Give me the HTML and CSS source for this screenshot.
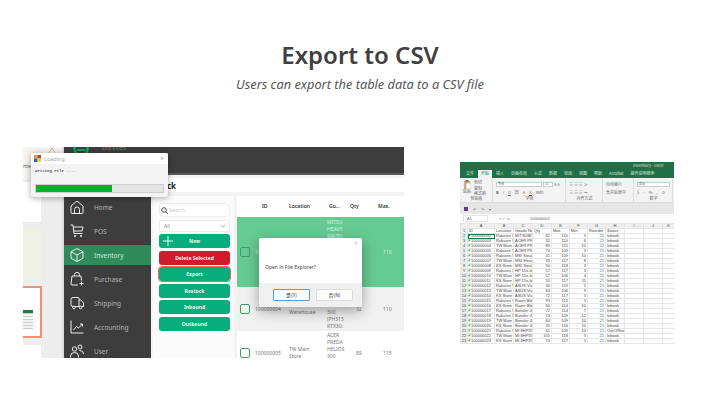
FILE: index.html
```html
<!DOCTYPE html>
<html lang="en">
<head>
    <meta charset="UTF-8">
    <title>Export to CSV</title>
    <link rel="stylesheet" href="styles.css">
</head>
<body>
    <header class="title-block">
        <h1>Export to CSV</h1>
        <p>Users can export the table data to a CSV file</p>
    </header>

    <main class="shots">
        <!-- left screenshot: the app with the dialogs open -->
        <div class="app-shot">
            <div class="slides">
                <div class="slides-top">
                    <svg class="chevron" width="12" height="9" viewBox="0 0 12 9"><path d="M1 8.5L6 1l5 7.5" fill="none" stroke="#e9a6a0" stroke-width="1"/></svg>
                    <span>nte</span>
                </div>
                <div class="slide slide-a"></div>
                <div class="slide slide-b"></div>
                <div class="slide slide-c"><div class="mini-sheet"></div></div>
                <div class="slide slide-d"></div>
            </div>
            <div class="app">
                <div class="topbar">
                    <svg class="logo" width="16" height="14" viewBox="0 0 16 14"><circle cx="8" cy="7" r="6.5" fill="none" stroke="#12a35c" stroke-width="2.5"/><path d="M4 8h8" stroke="#12a35c" stroke-width="2"/></svg>
                    <span class="brand">Better</span>
                </div>
                <div class="app-body">
                    <nav class="sidebar">
                        <div class="nav-item">
                            <svg width="14" height="14" viewBox="0 0 14 14"><path d="M1 6L7 1l6 5v6.5q0 1-1 1H2q-1 0-1-1zM4.5 13.5V9.500Q4.5 7 7 7t2.5 2.5v4" fill="none" stroke="#eee" stroke-width="1"/></svg>
                            <span>Home</span>
                        </div>
                        <div class="nav-item">
                            <svg width="14" height="14" viewBox="0 0 14 14"><path d="M.5 1H3l1 8.5h8.5M3.5 3H13l-1 4H4" fill="none" stroke="#eee" stroke-width="1"/><circle cx="5" cy="12" r="1" fill="#eee"/><circle cx="11" cy="12" r="1" fill="#eee"/></svg>
                            <span>POS</span>
                        </div>
                        <div class="nav-item is-active">
                            <svg width="14" height="14" viewBox="0 0 14 14"><path d="M7 .5l6 3.25v6.5L7 13.5l-6-3.25v-6.5zM1 3.75L7 7l6-3.25M7 7v6.5" fill="none" stroke="#eee" stroke-width="1"/></svg>
                            <span>Inventory</span>
                        </div>
                        <div class="nav-item">
                            <svg width="14" height="14" viewBox="0 0 14 14"><path d="M4.5 4V2.5Q4.5 .5 7 .5t2.5 2V4M8 13H2q-1 0-1-1l1-8h9l.5 4.5M11.5 9.5v4M9.5 11.5h4" fill="none" stroke="#eee" stroke-width="1"/></svg>
                            <span>Purchase</span>
                        </div>
                        <div class="nav-item">
                            <svg width="14" height="14" viewBox="0 0 14 14"><path d="M3 1.5h5q1 0 1 1v8H3q-2 0-2-2v-5q0-2 2-2zM9 4h2l2.5 3v3.5H9" fill="none" stroke="#eee" stroke-width="1"/><circle cx="4" cy="11.5" r="1.3" fill="#3d3d3d" stroke="#eee"/><circle cx="10.5" cy="11.5" r="1.3" fill="#3d3d3d" stroke="#eee"/></svg>
                            <span>Shipping</span>
                        </div>
                        <div class="nav-item">
                            <svg width="14" height="14" viewBox="0 0 14 14"><path d="M1 .5V13h12.500M3.5 10l3-3.500 2 1.500 4-4M10 4h2.5v2.5" fill="none" stroke="#eee" stroke-width="1"/></svg>
                            <span>Accounting</span>
                        </div>
                        <div class="nav-item">
                            <svg width="14" height="14" viewBox="0 0 14 14"><circle cx="4.5" cy="5" r="2.2" fill="none" stroke="#eee"/><circle cx="10" cy="3" r="2" fill="none" stroke="#eee"/><path d="M.5 13.5V12q0-3.500 4-3.500t4 3.500v1.500M9.500 6.500q4 0 4 3.500" fill="none" stroke="#eee"/></svg>
                            <span>User</span>
                        </div>
                    </nav>
                    <div class="content">
                        <div class="page-title">Stock</div>
                        <div class="work">
                            <aside class="filters">
                                <div class="search">
                                    <svg class="search-icon" width="7" height="7" viewBox="0 0 7 7"><circle cx="3" cy="3" r="2.3" fill="none" stroke="#444"/><path d="M4.7 4.7L6.8 6.8" stroke="#444"/></svg>
                                    <span>Search</span>
                                </div>
                                <div class="select">All<span class="chev"></span></div>
                                <div class="btn">
                                    <svg class="plus" width="10" height="10" viewBox="0 0 10 10"><path d="M5 0v10M0 5h10" stroke="#e8f8f2" stroke-width="1"/></svg>
                                    <span>New</span>
                                </div>
                                <div class="btn btn-red">Delete Selected</div>
                                <div class="btn is-marked">Export</div>
                                <div class="btn">Restock</div>
                                <div class="btn">Inbound</div>
                                <div class="btn">Outbound</div>
                            </aside>
                            <section class="table">
                                <div class="row row-head">
                                    <span class="c-check"></span>
                                    <span class="c-id">ID</span>
                                    <span class="c-loc">Location</span>
                                    <span class="c-goods">Go...</span>
                                    <span class="c-qty">Qty</span>
                                    <span class="c-max">Max.</span>
                                </div>
                                <div class="row row-selected">
                                    <span class="c-check"><i class="box"></i></span>
                                    <span class="c-id">100000003</span>
                                    <span class="c-loc"></span>
                                    <span class="c-goods goods-top">MITSU<br>HEAVY<br>SRK50:</span>
                                    <span class="c-qty"></span>
                                    <span class="c-max">110</span>
                                </div>
                                <div class="row row-grey">
                                    <span class="c-check"><i class="box"></i></span>
                                    <span class="c-id">100000004</span>
                                    <span class="c-loc">TW Main<br>Warehouse</span>
                                    <span class="c-goods">ACER<br>PREDA<br>HELIOS<br>300<br>(PH315<br>RTX30:</span>
                                    <span class="c-qty">32</span>
                                    <span class="c-max">110</span>
                                </div>
                                <div class="row">
                                    <span class="c-check"><i class="box"></i></span>
                                    <span class="c-id">100000005</span>
                                    <span class="c-loc">TW Main<br>Store</span>
                                    <span class="c-goods">ACER<br>PREDA<br>HELIOS<br>300<br>(PH315<br>RTX30:</span>
                                    <span class="c-qty">89</span>
                                    <span class="c-max">115</span>
                                </div>
                            </section>
                        </div>
                    </div>
                </div>
            </div>

            <div class="loading">
                <div class="loading-title">
                    <svg width="7" height="7" viewBox="0 0 7 7"><rect width="3.5" height="3.5" fill="#e0a030"/><rect x="3.5" width="3.5" height="3.5" fill="#c04040"/><rect y="3.5" width="3.5" height="3.5" fill="#3060c0"/><rect x="3.5" y="3.5" width="3.5" height="3.5" fill="#e0d050"/></svg>
                    <span>Loading</span>
                    <span class="close">×</span>
                </div>
                <div class="loading-text">Writing File ....</div>
                <div class="progress"><div class="progress-fill"></div></div>
            </div>

            <div class="dialog">
                <div class="dialog-main">
                    <span class="close">×</span>
                    <p>Open in File Explorer?</p>
                </div>
                <div class="dialog-foot">
                    <span class="dlg-btn is-default">是(Y)</span>
                    <span class="dlg-btn">否(N)</span>
                </div>
            </div>
        </div>

        <!-- right screenshot: the exported file in a spreadsheet -->
        <div class="sheet-shot">
            <div class="xl-title">Inventory - Excel</div>
            <div class="xl-tabs">
                <span>文件</span><span class="is-on">开始</span><span>插入</span><span>页面布局</span><span>公式</span><span>数据</span><span>审阅</span><span>视图</span><span>帮助</span><span>Acrobat</span><span>操作说明搜索</span>
            </div>
            <div class="xl-ribbon">
                <div class="rb rb-clip">
                    <div class="rb-body clip-body">
                        <div class="paste">
                            <svg width="8" height="9" viewBox="0 0 8 9"><rect x="1" y="1" width="6" height="8" fill="#d8b070"/><rect x="2.5" width="3" height="2" fill="#777"/><rect x="3" y="3" width="5" height="6" fill="#fff" stroke="#999" stroke-width=".5"/></svg>
                            <span>粘贴</span>
                        </div>
                        <div class="clip-list"><span>剪切</span><span>复制</span><span>格式刷</span></div>
                    </div>
                    <div class="rb-label">剪贴板</div>
                </div>
                <div class="rb rb-font">
                    <div class="rb-body">
                        <div class="rb-line">
                            <div class="rb-input font-name">等线</div>
                            <div class="rb-input font-size">11</div>
                            <span>A A</span>
                        </div>
                        <div class="rb-line marks">
                            <b>B</b><i>I</i><u>U</u><span>田</span><span class="mark-y">A</span><span class="mark-r">A</span><span>wén</span>
                        </div>
                    </div>
                    <div class="rb-label">字体</div>
                </div>
                <div class="rb rb-align">
                    <div class="rb-body">
                        <div class="rb-line">≡ ≡ ≡ ≫</div>
                        <div class="rb-line">≡ ≡ ≡ ⇥</div>
                    </div>
                    <div class="rb-label">对齐方式</div>
                </div>
                <div class="rb rb-wrap">
                    <div class="rb-body">
                        <div class="rb-line">自动换行</div>
                        <div class="rb-line">合并后居中</div>
                    </div>
                </div>
                <div class="rb rb-num">
                    <div class="rb-body">
                        <div class="rb-line"><div class="rb-input num-input">常规</div></div>
                        <div class="rb-line marks"><span>$</span><span>-</span><span>%</span><span>,</span><span>.0</span></div>
                    </div>
                    <div class="rb-label">数字</div>
                </div>
            </div>
            <div class="xl-quick">
                <span class="save"></span><span>↶</span><span>↷</span><span>▾</span>
            </div>
            <div class="xl-formula">
                <span class="name-box">A1</span>
                <span class="fx">× ✓ fx</span>
                <span class="fx-val">100000001</span>
            </div>
            <table class="xl-grid" id="grid"></table>
        </div>
    </main>

    <script src="grid.js"></script>
</body>
</html>
```

FILE: styles.css
```css
body {
    margin: 0;
    width: 720px;
    height: 405px;
    overflow: hidden;
    background: #fff;
    font-family: "Noto Sans", sans-serif;
    color: #404040;
}
.title-block {
    padding-top: 39px;
    text-align: center;
}
.title-block h1 {
    margin: 0;
    font-size: 24px;
    line-height: 32px;
    font-weight: 600;
}
.title-block p {
    margin: 5px 0 0;
    font-size: 12.8px;
    line-height: 16px;
    font-style: italic;
    color: #555;
}
.shots {
    display: flex;
    align-items: flex-start;
    gap: 56px;
    padding: 55px 0 0 23px;
}

/* left screenshot */
.app-shot {
    position: relative;
    display: flex;
    width: 381px;
    height: 211px;
    overflow: hidden;
    background: #f1f1f1;
    font-size: 5px;
}
.slides {
    width: 41px;
    flex: none;
    box-sizing: border-box;
    background: #ededed;
    border-right: 2px solid #dcdcdc;
}
.slides-top {
    position: relative;
    height: 33px;
    background: #f6f3f1;
    font-size: 5px;
    color: #666;
}
.slides-top span {
    position: absolute;
    left: 0;
    top: 16px;
}
.chevron {
    position: absolute;
    left: 23px;
    top: 0;
}
.slide {
    width: 18px;
    background: #fff;
}
.slide-a {
    height: 40px;
    margin-top: 2px;
}
.slide-b {
    height: 50px;
    margin-top: 8px;
    background: #eef1e3;
}
.slide-c {
    box-sizing: border-box;
    width: 19px;
    height: 52px;
    margin-top: 6px;
    padding-top: 22px;
    border: 2px solid #ef8d75;
    border-left: 0;
}
.mini-sheet {
    width: 10px;
    height: 20px;
    box-sizing: border-box;
    background: repeating-linear-gradient(#ccc 0 1px, #f4f4f4 1px 3px);
    border-top: 3px solid #1f7a45;
}
.slide-d {
    height: 20px;
    margin-top: 7px;
}
.app {
    width: 340px;
    flex: none;
    display: flex;
    flex-direction: column;
}
.topbar {
    height: 26px;
    flex: none;
    background: #3d3d3d;
    border-bottom: 2px solid #595959;
    display: flex;
    align-items: flex-start;
    gap: 13px;
    padding-left: 9px;
    overflow: hidden;
}
.logo {
    flex: none;
    margin-top: -5px;
}
.brand {
    margin-top: -6px;
    color: #1d8a50;
    font-size: 8px;
    font-weight: 700;
}
.app-body {
    display: flex;
    flex: 1;
    min-height: 0;
}
.sidebar {
    width: 87px;
    flex: none;
    box-sizing: border-box;
    background: #3d3d3d;
    padding-top: 22px;
    display: flex;
    flex-direction: column;
    gap: 4px;
}
.nav-item {
    height: 20px;
    flex: none;
    display: flex;
    align-items: center;
    gap: 10px;
    padding-left: 6px;
    color: #b5b5b5;
    font-size: 6.5px;
}
.nav-item svg {
    flex: none;
}
.nav-item.is-active {
    background: #2f8c5a;
    color: #cfe6d8;
}
.content {
    flex: 1;
    min-width: 0;
    background: #f3f3f3;
    padding-top: 3px;
}
.page-title {
    height: 14px;
    background: #fff;
    padding-left: 3px;
    font-size: 8px;
    font-weight: 700;
    color: #222;
    line-height: 16px;
}
.work {
    display: flex;
    margin-top: 4px;
    gap: 3px;
    padding-left: 2px;
}
.filters {
    width: 81px;
    flex: none;
    box-sizing: border-box;
    height: 170px;
    padding: 7px 0 0 6px;
    background: #fbfbfb;
    display: flex;
    flex-direction: column;
    gap: 2.5px;
}
.search, .select {
    width: 71px;
    box-sizing: border-box;
    background: #fff;
    border: 1px solid #ececec;
    border-radius: 4px;
    font-size: 5px;
    position: relative;
}
.search {
    height: 14px;
    display: flex;
    align-items: center;
    gap: 1px;
    padding-left: 1px;
    color: #c8c8c8;
}
.search-icon {
    flex: none;
}
.select {
    height: 12px;
    color: #888;
    padding-left: 4px;
    line-height: 10px;
    border-radius: 2px;
}
.chev {
    position: absolute;
    right: 4px;
    top: 2px;
    width: 3px;
    height: 3px;
    border: solid #ccc;
    border-width: 0 1px 1px 0;
    transform: rotate(45deg);
}
.btn {
    width: 71px;
    height: 14px;
    flex: none;
    background: #07ad7b;
    color: #e8f8f2;
    font-size: 5px;
    font-weight: 700;
    border-radius: 3px;
    display: flex;
    align-items: center;
    justify-content: center;
    position: relative;
}
.plus {
    position: absolute;
    left: 4px;
    top: 2px;
}
.btn-red {
    background: #cf1b2b;
}
.is-marked {
    outline: 1px solid #e8646a;
}
.table {
    flex: 1;
    min-width: 0;
    background: #fff;
    font-size: 5px;
    color: #777;
}
.row {
    display: flex;
    align-items: center;
    height: 44px;
    background: #fff;
}
.row-head {
    height: 21px;
    color: #333;
    font-weight: 600;
}
.row-selected {
    height: 70px;
    background: #66cb92;
    color: #d8f3e2;
}
.goods-top {
    align-self: flex-start;
    padding-top: 2px;
}
.row-grey {
    background: #f1f1f1;
}
.row > span {
    line-height: 7px;
    flex: none;
    box-sizing: border-box;
}
.c-check {
    width: 18px;
    padding-left: 3px;
}
.c-id {
    width: 34px;
}
.row-head .c-id {
    padding-left: 7px;
}
.c-loc {
    width: 38px;
}
.c-goods {
    width: 23px;
}
.row-head .c-goods {
    padding-left: 2px;
}
.c-qty {
    width: 28px;
    padding-left: 6px;
}
.row-head .c-qty, .row-head .c-max {
    padding-left: 0;
}
.c-max {
    width: 26px;
    padding-left: 5px;
}
.box {
    display: block;
    width: 8px;
    height: 8px;
    border: 1px solid #3f9d68;
    border-radius: 2px;
}

/* overlays on the left screenshot */
.loading {
    position: absolute;
    left: 8px;
    top: 6px;
    width: 137px;
    height: 44px;
    background: #f3f3f3;
    border-radius: 2px;
    box-shadow: 0 1px 6px rgba(0, 0, 0, 0.35);
}
.loading-title {
    height: 11px;
    background: #fff;
    border-radius: 2px 2px 0 0;
    display: flex;
    align-items: center;
    gap: 3px;
    padding: 0 4px 0 3px;
    font-size: 5.5px;
    color: #aaa;
}
.loading-title .close {
    margin-left: auto;
    font-size: 7px;
}
.loading-text {
    height: 14px;
    box-sizing: border-box;
    padding: 4px 4px 0;
    font-family: "Liberation Mono", monospace;
    font-size: 4px;
    line-height: 6px;
    font-weight: 700;
    color: #555;
}
.progress {
    margin: 6px 4px 0;
    height: 9px;
    box-sizing: border-box;
    background: #e4e4e4;
    border: 1px solid #cfcfcf;
}
.progress-fill {
    width: 60%;
    height: 100%;
    background: #0aae2a;
}
.dialog {
    position: absolute;
    left: 236px;
    top: 91px;
    width: 103px;
    height: 69px;
    background: #fff;
    border-radius: 2px;
    display: flex;
    flex-direction: column;
    box-shadow: 0 4px 14px rgba(0, 0, 0, 0.35);
}
.dialog-main {
    flex: 1;
    position: relative;
    font-size: 5px;
    line-height: 6px;
    color: #444;
}
.dialog-main p {
    margin: 0;
    padding: 26px 0 0 6px;
}
.dialog-main .close {
    position: absolute;
    right: 4px;
    top: 3px;
    font-size: 7px;
    color: #bbb;
}
.dialog-foot {
    height: 24px;
    flex: none;
    background: #f0f0f0;
    display: flex;
    align-items: center;
    gap: 6px;
    padding-left: 14px;
    font-family: "Noto Sans CJK SC", sans-serif;
}
.dlg-btn {
    width: 37px;
    height: 12px;
    box-sizing: border-box;
    background: #fdfdfd;
    border: 1px solid #ddd;
    border-radius: 1px;
    text-align: center;
    font-size: 5px;
    line-height: 10px;
    color: #333;
}
.dlg-btn.is-default {
    border-color: #5a9bd0;
}

/* right screenshot */
.sheet-shot {
    width: 214px;
    height: 182px;
    margin-top: 15px;
    overflow: hidden;
    background: #fff;
    font-family: "Noto Sans CJK SC", "Liberation Sans", sans-serif;
    font-size: 4px;
    color: #666;
}
.xl-title {
    height: 8px;
    background: #1f7145;
    color: #cfe3d7;
    padding-left: 173px;
    line-height: 6px;
}
.xl-tabs {
    height: 8px;
    background: #1f7145;
    color: #d8e8df;
    display: flex;
    gap: 7px;
    padding-left: 6px;
    line-height: 7px;
}
.xl-tabs .is-on {
    background: #f3f3f3;
    color: #1f7145;
    padding: 0 3px;
    margin: 0 -3px;
}
.xl-ribbon {
    height: 25px;
    box-sizing: border-box;
    background: #f3f3f3;
    border-bottom: 1px solid #ddd;
    display: flex;
}
.rb {
    box-sizing: border-box;
    padding: 2px 2px 0 3px;
    border-right: 1px solid #ddd;
    display: flex;
    flex-direction: column;
    overflow: hidden;
}
.rb-body {
    height: 16px;
}
.rb-label {
    text-align: center;
    line-height: 5px;
}
.rb-line {
    display: flex;
    align-items: center;
    gap: 1px;
    height: 8px;
    white-space: nowrap;
}
.marks {
    gap: 4px;
}
.rb-clip {
    width: 33px;
}
.clip-body {
    display: flex;
    gap: 3px;
}
.paste {
    display: flex;
    flex-direction: column;
    align-items: center;
    line-height: 5px;
}
.clip-list {
    display: flex;
    flex-direction: column;
    line-height: 5.5px;
}
.rb-font {
    width: 73px;
}
.rb-input {
    height: 5px;
    box-sizing: border-box;
    background: #fff;
    border: 1px solid #ccc;
    line-height: 3px;
    padding-left: 1px;
    font-size: 3px;
}
.font-name {
    width: 46px;
}
.font-size {
    width: 10px;
}
.mark-y {
    border-bottom: 1px solid #ffd800;
}
.mark-r {
    border-bottom: 1px solid #e00;
}
.rb-align {
    width: 37px;
}
.rb-wrap {
    width: 31px;
}
.rb-num {
    width: 39px;
}
.num-input {
    width: 35px;
}
.xl-quick {
    height: 11px;
    box-sizing: border-box;
    background: #e6e6e6;
    padding-left: 4px;
    display: flex;
    align-items: center;
    gap: 5px;
}
.save {
    width: 4px;
    height: 4px;
    background: #5b3a9a;
}
.xl-formula {
    height: 9px;
    box-sizing: border-box;
    background: #fbfbfb;
    display: flex;
    align-items: center;
    padding-left: 3px;
    font-family: "Liberation Sans", sans-serif;
}
.name-box {
    width: 25px;
    box-sizing: border-box;
    padding-left: 3px;
    line-height: 5px;
    background: #fff;
    border: 1px solid #e4e4e4;
}
.fx {
    width: 42px;
    padding-left: 11px;
    box-sizing: border-box;
    color: #999;
}
.xl-grid {
    border-collapse: collapse;
    table-layout: fixed;
    width: 214px;
    font-family: "Liberation Sans", sans-serif;
    font-size: 4px;
    color: #444;
}
.xl-grid td, .xl-grid th {
    height: 4px;
    line-height: 4px;
    padding: 0 0 0 1px;
    border: 1px solid #e6e6e6;
    white-space: nowrap;
    overflow: hidden;
    font-weight: 400;
    text-align: left;
}
.xl-grid th {
    background: #eee;
    text-align: center;
    padding: 0;
}
.xl-grid td.num {
    text-align: right;
    padding: 0 1px 0 0;
}
.xl-grid td.code {
    background: linear-gradient(135deg, #2e9e4f 0 2px, transparent 2px);
    padding-left: 3px;
}
.xl-grid td.is-current {
    outline: 1px solid #1f7145;
    outline-offset: -1px;
}
.xl-grid td.reorder {
    color: #1f6f8a;
}
```

FILE: grid.js
```js
// fills the spreadsheet picture with the exported rows
var rows = [
  ["Rakuten S", "MITSUBISH", 82, 110, 9, 21, "Inbook"],
  ["Rakuten S", "ACER PRE", 32, 110, 6, 21, "Inbook"],
  ["TW Main", "ACER PRE", 89, 115, 10, 22, "Inbook"],
  ["Rakuten S", "ACER PRE", 74, 109, 3, 21, "Inbook"],
  ["Rakuten S", "MSI Steal", 41, 109, 10, 21, "Inbook"],
  ["TW Main", "MSI Steal", 33, 117, 8, 21, "Inbook"],
  ["KS Store", "MSI Steal", 90, 118, 3, 21, "Inbook"],
  ["Rakuten S", "HP 15s-fq", 57, 117, 3, 21, "Inbook"],
  ["TW Main", "HP 15s-fq", 57, 106, 4, 21, "Inbook"],
  ["KS Store", "HP 15s-fq", 55, 117, 11, 21, "Inbook"],
  ["Rakuten S", "ASUS Vivo", 30, 119, 5, 21, "Inbook"],
  ["TW Main", "ASUS Vivo", 64, 106, 9, 21, "Inbook"],
  ["KS Store", "ASUS Vivo", 72, 117, 5, 21, "Inbook"],
  ["Rakuten S", "Razer Bld", 93, 112, 3, 21, "Inbook"],
  ["KS Store", "Razer Bld", 60, 114, 10, 21, "Inbook"],
  ["Rakuten S", "Bonsler 4T", 72, 114, 7, 21, "Inbook"],
  ["Rakuten S", "Bonsler 4T", 74, 109, 12, 21, "Inbook"],
  ["TW Main", "Bonsler 4T", 64, 109, 10, 21, "Inbook"],
  ["KS Store", "Bonsler 4T", 35, 116, 10, 21, "Inbook"],
  ["Rakuten S", "MI 8HP35", 61, 109, 10, 21, "OutOfStock"],
  ["TW Main", "MI 8HP35", 105, 118, 3, 21, "Inbook"],
  ["KS Store", "MI 8HP35", 74, 117, 5, 21, "Inbook"]
];
var letters = ["", "A", "B", "C", "D", "E", "F", "G", "H", "I", "J", "K"];
var widths = [7, 27, 19, 19, 19, 18, 18, 18, 19, 19, 19, 12];
var grid = document.getElementById("grid");
var html = "<colgroup>";
widths.forEach(function (w) {
  html += '<col style="width: ' + w + 'px">';
});
html += "</colgroup><tr>";
letters.forEach(function (l) {
  html += "<th>" + l + "</th>";
});
html += "</tr><tr><th>1</th><td>ID</td><td>Location</td><td>Goods Na</td><td>Qty</td><td>Max</td><td>Min</td><td>Reorder</td><td>Status</td><td></td><td></td><td></td></tr>";
rows.forEach(function (r, i) {
  var cls = i === 0 ? "code is-current" : "code";
  html += '<tr><th>' + (i + 2) + '</th><td class="' + cls + '">' + (100000002 + i) + "</td><td>" + r[0] + "</td><td>" + r[1] + '</td><td class="num">' + r[2] + '</td><td class="num">' + r[3] + '</td><td class="num">' + r[4] + '</td><td class="num reorder">' + r[5] + "</td><td>" + r[6] + "</td><td></td><td></td><td></td></tr>";
});
grid.innerHTML = html;
```
